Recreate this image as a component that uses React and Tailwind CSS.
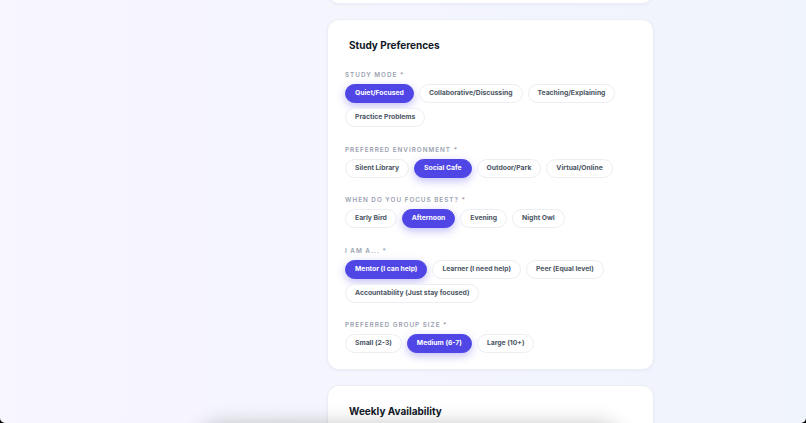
import React from "react";

const sections = [
  {
    label: "STUDY MODE *",
    options: ["Quiet/Focused", "Collaborative/Discussing", "Teaching/Explaining", "Practice Problems"],
    selected: "Quiet/Focused",
  },
  {
    label: "PREFERRED ENVIRONMENT *",
    options: ["Silent Library", "Social Cafe", "Outdoor/Park", "Virtual/Online"],
    selected: "Social Cafe",
  },
  {
    label: "WHEN DO YOU FOCUS BEST? *",
    options: ["Early Bird", "Afternoon", "Evening", "Night Owl"],
    selected: "Afternoon",
  },
  {
    label: "I AM A... *",
    options: ["Mentor (I can help)", "Learner (I need help)", "Peer (Equal level)", "Accountability (Just stay focused)"],
    selected: "Mentor (I can help)",
  },
  {
    label: "PREFERRED GROUP SIZE *",
    options: ["Small (2-3)", "Medium (6-7)", "Large (10+)"],
    selected: "Medium (6-7)",
  },
];

function Chip({ text, active }) {
  return (
    <button
      type="button"
      className={
        active
          ? "h-[19px] px-[9px] rounded-full bg-[#4f46e5] text-white text-[6.8px] font-bold leading-none flex items-center border border-[#4f46e5] shadow-[0_3px_8px_rgba(79,70,229,0.35)]"
          : "h-[19px] px-[9px] rounded-full bg-white text-[#4b5563] text-[6.8px] font-bold leading-none flex items-center border border-[#eceef3]"
      }
    >
      {text}
    </button>
  );
}

export default function App() {
  return (
    <div
      className="relative w-[806px] h-[423px] overflow-hidden bg-linear-to-r from-[#f8f6fe] to-[#f0f4fd]"
      style={{ fontFamily: "Inter, 'Noto Sans', sans-serif" }}
    >
      <div className="ml-[327px] w-[327px] -mt-[96px] flex flex-col gap-[15px]">
        <div className="h-[100px] rounded-[12px] bg-white border border-[#eceef5] shadow-[0_1px_3px_rgba(30,40,90,0.05)]" />

        <div className="rounded-[12px] bg-white border border-[#eceef5] shadow-[0_1px_3px_rgba(30,40,90,0.05)] pt-[18px] pb-[16px] px-[17px]">
          <h2 className="pl-[4px] text-[10px] leading-[14px] font-bold text-[#111827]">Study Preferences</h2>
          <div className="mt-[19px] flex flex-col gap-[18.5px]">
            {sections.map((s) => (
              <div key={s.label}>
                <div className="text-[6.3px] leading-[8px] font-semibold tracking-[0.16em] text-[#9aa1b0]">
                  {s.label}
                </div>
                <div className="mt-[5px] flex flex-wrap gap-[5px]">
                  {s.options.map((o) => (
                    <Chip key={o} text={o} active={o === s.selected} />
                  ))}
                </div>
              </div>
            ))}
          </div>
        </div>

        <div className="h-[100px] rounded-[12px] bg-white border border-[#eceef5] shadow-[0_1px_3px_rgba(30,40,90,0.05)] pt-[18px] px-[17px]">
          <h2 className="pl-[4px] text-[10px] leading-[14px] font-bold text-[#111827]">Weekly Availability</h2>
        </div>
      </div>

      <div className="absolute left-[200px] top-[432px] w-[420px] h-[60px] rounded-[20px] bg-white shadow-[0_-6px_22px_rgba(0,0,0,0.28)]" />

      <svg className="absolute left-0 bottom-0" width="5" height="5" viewBox="0 0 5 5">
        <path d="M0 0 L0 5 L5 5 A5 5 0 0 1 0 0 Z" fill="#000" />
      </svg>
      <svg className="absolute right-0 bottom-0" width="5" height="5" viewBox="0 0 5 5">
        <path d="M5 0 L5 5 L0 5 A5 5 0 0 0 5 0 Z" fill="#000" />
      </svg>
    </div>
  );
}
